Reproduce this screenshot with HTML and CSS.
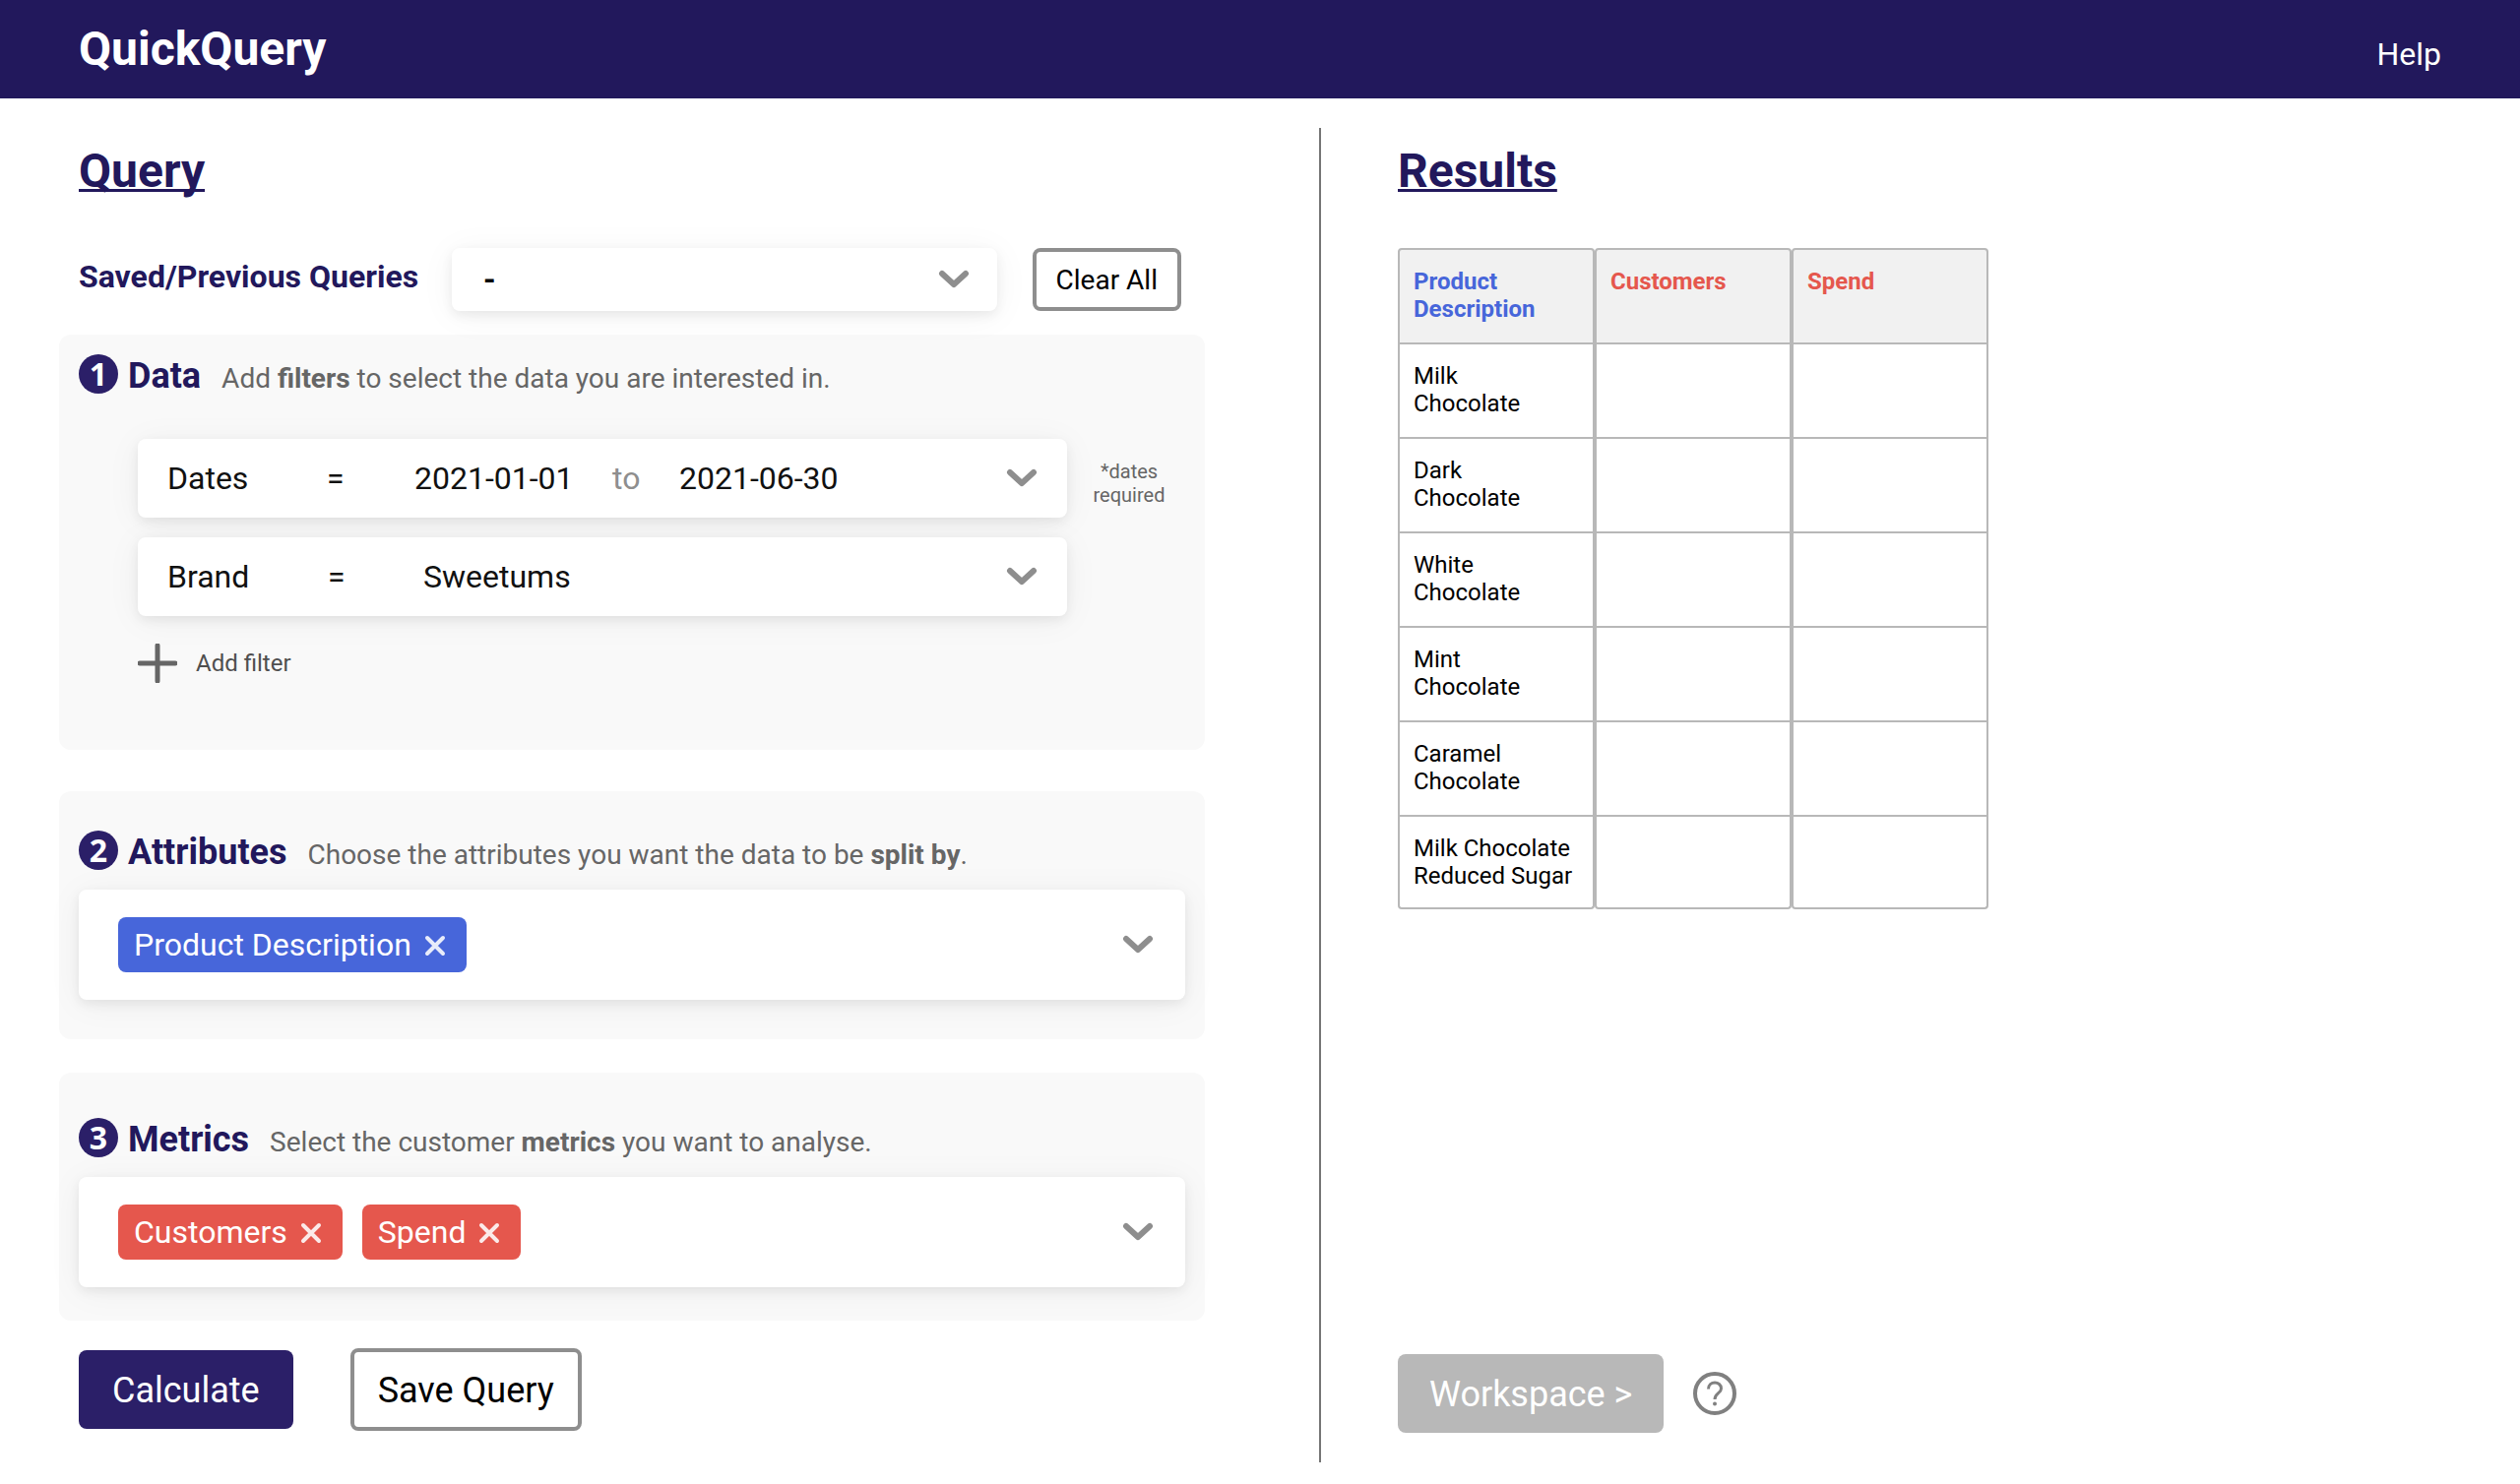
FILE: index.html
```html
<!DOCTYPE html>
<html lang="en">
<head>
<meta charset="utf-8">
<meta name="viewport" content="width=device-width, initial-scale=1">
<title>QuickQuery</title>
<link rel="stylesheet" href="styles.css">
</head>
<body>
<svg class="sprite" aria-hidden="true">
  <symbol id="chevron" viewBox="0 0 32 20"><path d="M4 4 L16 15 L28 4" fill="none" stroke="currentColor" stroke-width="6" stroke-linecap="round" stroke-linejoin="round"/></symbol>
  <symbol id="close" viewBox="0 0 24 24"><path d="M4 4 L20 20 M20 4 L4 20" fill="none" stroke="currentColor" stroke-width="4" stroke-linecap="round"/></symbol>
</svg>

<header class="topbar">
  <h1 class="brand">QuickQuery</h1>
  <a class="help-link" href="#help">Help</a>
</header>

<main class="workspace">
  <section class="query">
    <h2 class="section-title">Query</h2>

    <div class="saved">
      <label class="saved-label" for="saved">Saved/Previous Queries</label>
      <div class="saved-field">
        <select class="saved-select" id="saved"><option>-</option></select>
        <svg class="chevron"><use href="#chevron"/></svg>
      </div>
      <button class="btn btn-small" type="button">Clear All</button>
    </div>

    <section class="panel panel-data">
      <div class="panel-head">
        <span class="badge">1</span>
        <h3 class="panel-title">Data</h3>
        <p class="panel-text">Add <b>filters</b> to select the data you are interested in.</p>
      </div>
      <div class="filters">
        <div class="filter card">
          <select class="plain" aria-label="Filter field"><option>Dates</option></select>
          <select class="plain" aria-label="Operator"><option>=</option></select>
          <input class="plain" type="text" aria-label="Start date" value="2021-01-01">
          <span class="to">to</span>
          <input class="plain" type="text" aria-label="End date" value="2021-06-30">
          <button class="icon-btn" type="button" aria-label="Open dates"><svg class="chevron"><use href="#chevron"/></svg></button>
        </div>
        <p class="note">*dates<br>required</p>
        <div class="filter filter-value card">
          <select class="plain" aria-label="Filter field"><option>Brand</option></select>
          <select class="plain" aria-label="Operator"><option>=</option></select>
          <select class="plain" aria-label="Brand"><option>Sweetums</option></select>
          <button class="icon-btn" type="button" aria-label="Open brands"><svg class="chevron"><use href="#chevron"/></svg></button>
        </div>
      </div>
      <button class="add-filter" type="button">
        <svg class="plus" viewBox="0 0 40 40" aria-hidden="true"><path d="M20 2 V38 M2 20 H38" fill="none" stroke="currentColor" stroke-width="5" stroke-linecap="round"/></svg>
        Add filter
      </button>
    </section>

    <section class="panel panel-attributes">
      <div class="panel-head">
        <span class="badge">2</span>
        <h3 class="panel-title">Attributes</h3>
        <p class="panel-text">Choose the attributes you want the data to be <b>split by</b>.</p>
      </div>
      <div class="picker card">
        <button class="tag tag-attribute" type="button">Product Description <svg class="close"><use href="#close"/></svg></button>
        <button class="icon-btn" type="button" aria-label="Open attributes"><svg class="chevron"><use href="#chevron"/></svg></button>
      </div>
    </section>

    <section class="panel panel-metrics">
      <div class="panel-head">
        <span class="badge">3</span>
        <h3 class="panel-title">Metrics</h3>
        <p class="panel-text">Select the customer <b>metrics</b> you want to analyse.</p>
      </div>
      <div class="picker card">
        <button class="tag tag-metric" type="button">Customers <svg class="close"><use href="#close"/></svg></button>
        <button class="tag tag-metric" type="button">Spend <svg class="close"><use href="#close"/></svg></button>
        <button class="icon-btn" type="button" aria-label="Open metrics"><svg class="chevron"><use href="#chevron"/></svg></button>
      </div>
    </section>

    <div class="actions">
      <button class="btn btn-primary" type="button">Calculate</button>
      <button class="btn btn-outline" type="button">Save Query</button>
    </div>
  </section>

  <section class="results">
    <h2 class="section-title">Results</h2>
    <table class="table">
      <thead>
        <tr><th class="attribute" scope="col">Product Description</th><th class="metric" scope="col">Customers</th><th class="metric" scope="col">Spend</th></tr>
      </thead>
      <tbody>
        <tr><td>Milk<br>Chocolate</td><td></td><td></td></tr>
        <tr><td>Dark<br>Chocolate</td><td></td><td></td></tr>
        <tr><td>White<br>Chocolate</td><td></td><td></td></tr>
        <tr><td>Mint<br>Chocolate</td><td></td><td></td></tr>
        <tr><td>Caramel<br>Chocolate</td><td></td><td></td></tr>
        <tr><td>Milk Chocolate Reduced Sugar</td><td></td><td></td></tr>
      </tbody>
    </table>
    <div class="results-foot">
      <button class="btn btn-muted" type="button">Workspace &gt;</button>
      <button class="icon-btn" type="button" aria-label="About the workspace">
        <svg class="question" viewBox="0 0 44 44"><circle cx="22" cy="22" r="20" fill="none" stroke="currentColor" stroke-width="4"/><path d="M15.500 17.500 C15.500 9 28.500 9 28.500 17 C28.500 22 22 21.500 22 28" fill="none" stroke="currentColor" stroke-width="3"/><circle cx="22" cy="32.500" r="2" fill="currentColor"/></svg>
      </button>
    </div>
  </section>
</main>
</body>
</html>
```
FILE: styles.css
```css
* { box-sizing: border-box; }

body {
  margin: 0;
  background: #fff;
  color: #000;
  font-family: Roboto, "Liberation Sans", sans-serif;
}

h1, h2, h3, p { margin: 0; }

button, select, input { font-family: inherit; color: inherit; }
button { cursor: pointer; }

.sprite { display: none; }

.topbar {
  display: flex;
  justify-content: space-between;
  align-items: baseline;
  height: 100px;
  padding: 22px 80px;
  background: #22185c;
  color: #fff;
}

.brand {
  font-size: 48px;
  line-height: 56px;
  font-weight: 700;
}

.help-link {
  color: inherit;
  font-size: 32px;
  text-decoration: none;
}

.workspace {
  display: grid;
  grid-template-columns: minmax(0, 1342fr) minmax(0, 1218fr);
  min-height: calc(100vh - 100px);
  padding: 30px 0 22px;
}

.query {
  padding: 16px 116px 32px 60px;
  border-right: 2px solid #757575;
}

.results {
  display: flex;
  flex-direction: column;
  align-items: flex-start;
  padding: 16px 78px 30px;
}

.section-title {
  color: #22185c;
  font-size: 48px;
  line-height: 56px;
  font-weight: 700;
  text-decoration: underline 3px;
  text-decoration-skip-ink: none;
}

.query .section-title { margin-left: 20px; }

/* Saved queries */
.saved {
  display: flex;
  align-items: center;
  margin: 50px 24px 24px 20px;
}

.saved-label {
  color: #22185c;
  font-size: 32px;
  line-height: 40px;
  font-weight: 700;
  padding-bottom: 6px;
}

.saved-field {
  flex: 1;
  display: grid;
  align-items: center;
  margin: 0 36px 0 34px;
}

.saved-field > * { grid-area: 1 / 1; }

.saved-field .chevron {
  justify-self: end;
  margin-right: 28px;
  pointer-events: none;
}

.saved-select {
  width: 100%;
  height: 64px;
  padding: 0 32px;
  appearance: none;
  border: 0;
  border-radius: 8px;
  background: #fff;
  box-shadow: 0 4px 12px rgba(0, 0, 0, .07), 0 4px 36px rgba(0, 0, 0, .05);
  font-size: 32px;
  font-weight: 700;
}

/* Panels */
.panel {
  padding: 20px;
  border-radius: 12px;
  background: #f9f9f9;
}

.panel-data { padding-bottom: 68px; }
.panel-attributes { margin-top: 42px; padding: 40px 20px; }
.panel-metrics { margin-top: 34px; padding: 46px 20px 34px; }

.panel-head {
  display: flex;
  align-items: baseline;
  height: 40px;
}

.badge {
  align-self: flex-start;
  width: 40px;
  height: 40px;
  border-radius: 50%;
  background: #2b1f68;
  color: #fff;
  font: 700 32px/40px "Open Sans", sans-serif;
  text-align: center;
}

.panel-title {
  margin: 0 21px 0 10px;
  color: #22185c;
  font-size: 36px;
  line-height: 44px;
  font-weight: 700;
}

.panel-text {
  color: #666;
  font-size: 28px;
  line-height: 36px;
}

.card {
  border-radius: 8px;
  background: #fff;
  box-shadow: 0 4px 12px rgba(0, 0, 0, .07), 0 4px 36px rgba(0, 0, 0, .05);
}

.filters {
  display: grid;
  grid-template-columns: minmax(0, 1fr) 120px;
  row-gap: 20px;
  margin: 46px 0 28px 60px;
}

.filter {
  display: grid;
  grid-template-columns: 162px 89px 201px 68px minmax(0, 1fr) auto;
  align-items: center;
  height: 80px;
  padding: 0 30px;
  color: #111;
  font-size: 32px;
}

.filter-value { grid-template-columns: 163px 97px minmax(0, 1fr) auto; }

.plain {
  width: 100%;
  height: 48px;
  padding: 0;
  appearance: none;
  border: 0;
  background: transparent;
  font-size: 32px;
}

.to { color: #8e8e8e; }

.note {
  padding: 21px 0 0 6px;
  color: #666;
  font-size: 20px;
  line-height: 24px;
  text-align: center;
}

.icon-btn {
  display: block;
  padding: 0;
  border: 0;
  background: none;
}

.icon-btn svg { display: block; }

.chevron {
  width: 32px;
  height: 20px;
  color: #8e8e8e;
}

.add-filter {
  display: flex;
  align-items: center;
  gap: 19px;
  margin-left: 60px;
  padding: 0;
  border: 0;
  background: none;
  color: #4f4f4f;
  font-size: 24px;
}

.plus {
  width: 40px;
  height: 40px;
  color: #666;
}

.picker {
  display: flex;
  align-items: center;
  gap: 20px;
  height: 112px;
  margin-top: 20px;
  padding: 0 32px 0 40px;
}

.picker .icon-btn { margin-left: auto; }

.tag {
  display: flex;
  align-items: center;
  gap: 12px;
  height: 56px;
  padding: 0 20px 0 16px;
  border: 0;
  border-radius: 8px;
  color: #fff;
  font-size: 32px;
}

.tag-attribute { background: #4766da; }
.tag-metric { background: #e5574d; }

.close {
  width: 24px;
  height: 24px;
  margin-top: 2px;
  opacity: .88;
}

/* Buttons */
.btn {
  border: 4px solid #8e8e8e;
  border-radius: 8px;
  background: #fff;
  font-size: 36px;
}

.btn-small {
  height: 64px;
  padding: 0 20px;
  font-size: 28px;
}

.btn-primary {
  height: 80px;
  padding: 2px 34px 0;
  border: 0;
  background: #2b1f68;
  color: #fff;
}

.btn-outline { height: 84px; padding: 2px 24px 0; }

.btn-muted {
  height: 80px;
  padding: 2px 32px 0;
  border: 0;
  background: #b8b8b8;
  color: #fff;
}

.actions {
  display: flex;
  align-items: center;
  gap: 58px;
  margin: 28px 0 0 20px;
}

/* Results table */
.table {
  width: 600px;
  margin-top: 50px;
  border-collapse: separate;
  border-spacing: 0;
  table-layout: fixed;
  font-size: 24px;
  line-height: 28px;
}

.table th, .table td {
  padding: 18px 10px 20px 14px;
  border: solid #b8b8b8;
  border-width: 0 2px 2px;
  text-align: left;
  vertical-align: top;
}

.table th {
  border-top-width: 2px;
  border-radius: 4px 4px 0 0;
  background: #f1f1f1;
  font-weight: 700;
}

.table tbody tr:last-child td {
  padding-bottom: 18px;
  border-radius: 0 0 4px 4px;
}

.attribute { color: #4766da; }
.metric { color: #e5574d; }

.results-foot {
  display: flex;
  align-items: center;
  gap: 30px;
  margin-top: auto;
}

.question {
  width: 44px;
  height: 44px;
  color: #808080;
}
```
